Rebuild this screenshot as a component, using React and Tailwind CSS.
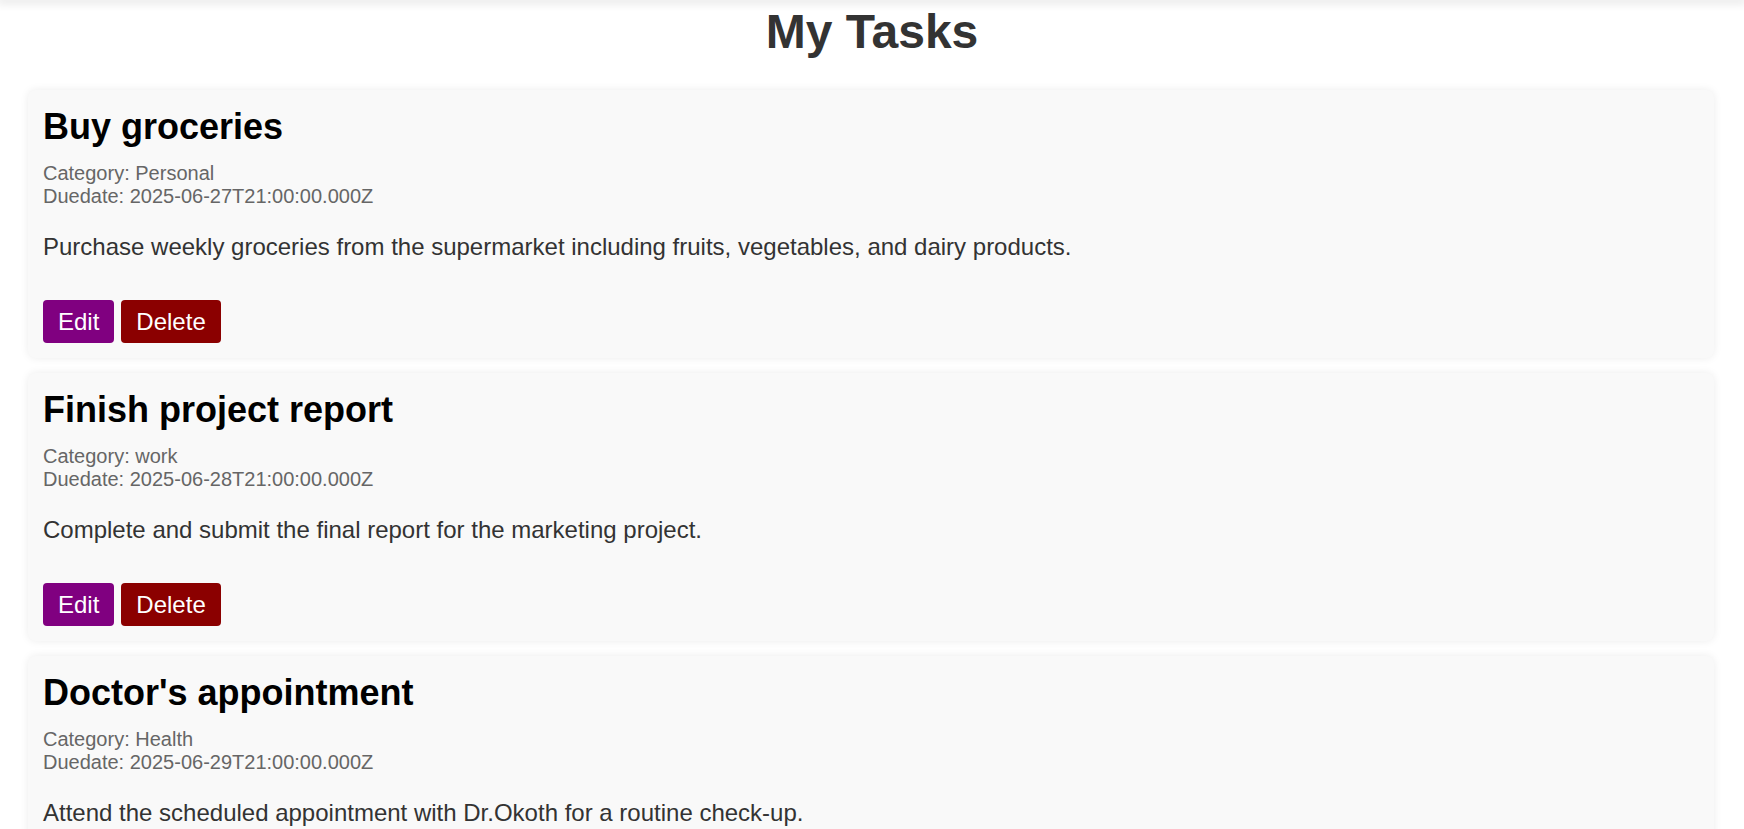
import React from "react";

const tasks = [
  {
    title: "Buy groceries",
    category: "Personal",
    due: "2025-06-27T21:00:00.000Z",
    desc: "Purchase weekly groceries from the supermarket including fruits, vegetables, and dairy products.",
  },
  {
    title: "Finish project report",
    category: "work",
    due: "2025-06-28T21:00:00.000Z",
    desc: "Complete and submit the final report for the marketing project.",
  },
  {
    title: "Doctor's appointment",
    category: "Health",
    due: "2025-06-29T21:00:00.000Z",
    desc: "Attend the scheduled appointment with Dr.Okoth for a routine check-up.",
  },
];

function TaskCard({ t }) {
  return (
    <div className="bg-[#f9f9f9] rounded-[8px] shadow-[0_0_8px_rgba(0,0,0,0.08)] pt-[16px] pb-[15px] px-[15px]">
      <h2 className="text-[36px] leading-[41px] font-bold text-black mb-[15px]">{t.title}</h2>
      <div className="text-[20px] leading-[23px] text-[#666]">
        <div>Category: {t.category}</div>
        <div>Duedate: {t.due}</div>
      </div>
      <p className="mt-[25px] text-[24px] leading-[28px] text-[#333]">{t.desc}</p>
      <div className="mt-[39px] flex gap-[7px]">
        <button className="h-[43px] px-[15px] rounded-[4px] bg-[#800080] text-white text-[24px] leading-[28px]">Edit</button>
        <button className="h-[43px] px-[15px] rounded-[4px] bg-[#8b0000] text-white text-[24px] leading-[28px]">Delete</button>
      </div>
    </div>
  );
}

export default function App() {
  return (
    <div className="min-h-screen bg-white font-['Liberation_Sans',Arial,sans-serif]">
      <div className="h-0 shadow-[0_0_10px_3px_rgba(0,0,0,0.12)]"></div>
      <h1 className="pt-[4px] text-center text-[48px] leading-[55px] font-bold text-[#333]">My Tasks</h1>
      <div className="mt-[31px] ml-[28px] mr-[30px] flex flex-col gap-[15px]">
        {tasks.map((t) => (
          <TaskCard key={t.title} t={t} />
        ))}
      </div>
    </div>
  );
}
